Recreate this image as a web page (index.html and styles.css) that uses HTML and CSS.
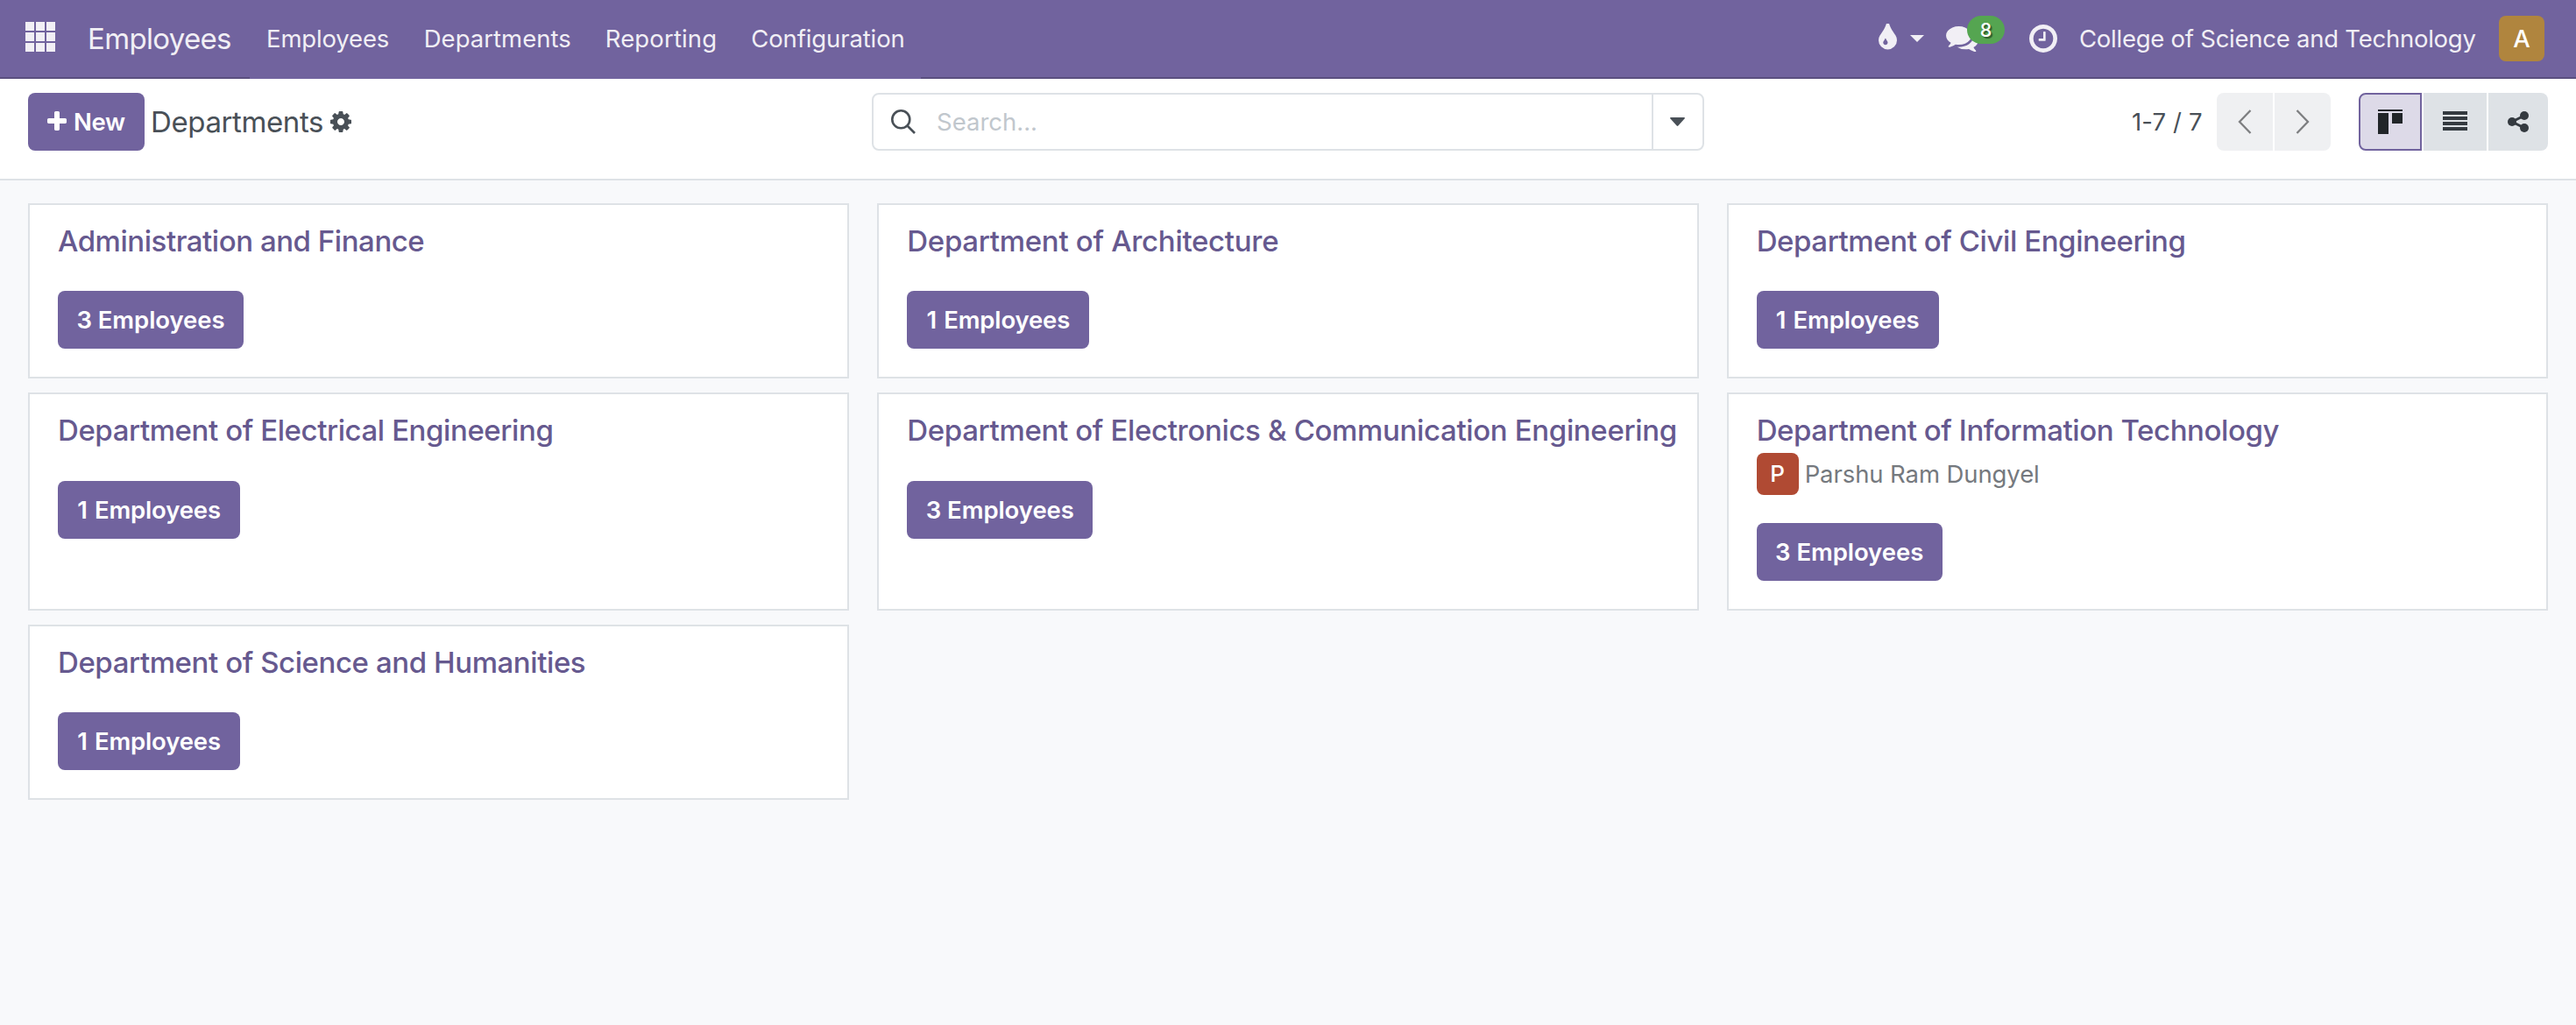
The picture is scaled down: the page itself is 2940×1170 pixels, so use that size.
FILE: index.html
```html
<!DOCTYPE html>
<html lang="en">
<head>
<meta charset="utf-8">
<title>Departments</title>
<link rel="stylesheet" href="styles.css">
</head>
<body>
<header class="navbar">
  <a class="apps" aria-label="Home menu">
    <svg class="icon-apps" viewBox="0 0 34 34"><path d="M0 0h10v10H0zM12 0h10v10H12zM24 0h10v10H24zM0 12h10v10H0zM12 12h10v10H12zM24 12h10v10H24zM0 24h10v10H0zM12 24h10v10H12zM24 24h10v10H24z"/></svg>
  </a>
  <a class="brand">Employees</a>
  <nav class="menu">
    <a class="menu-item menu-employees">Employees</a>
    <a class="menu-item">Departments</a>
    <a class="menu-item menu-reporting">Reporting</a>
    <a class="menu-item menu-config">Configuration</a>
  </nav>
  <div class="systray">
    <svg class="icon-drop" viewBox="384 128 1024 1408"><path d="M896 1152q0-36-20-69-1-1-15.500-22.500t-25.500-38-25-44-21-50.500q-4-16-21-16t-21 16q-7 23-21 50.500t-25 44-25.500 38-15.500 22.500q-20 33-20 69 0 53 37.500 90.500t90.500 37.500 90.500-37.500 37.500-90.500zm512-128q0 212-150 362t-362 150-362-150-150-362q0-145 81-275 6-9 62.500-90.500t101-151 99.500-178 83-201.500q9-30 34-47t51-17 51.500 17 33.500 47q28 93 83 201.500t99.500 178 101 151 62.500 90.500q81 127 81 275z"/></svg>
    <svg class="icon-caret" viewBox="0 0 16 8"><path d="M0 0h16L8 8z"/></svg>
    <span class="messages">
      <svg class="icon-comments" viewBox="0 256 1792 1408"><path d="M1408 768q0 139-94 257t-256.500 186.500-353.500 68.500q-86 0-176-16-124 88-278 128-36 9-86 16h-3q-11 0-20.500-8t-11.500-21q-1-3-1-6.500t.5-6.500 2-6l2.500-5 3.500-5.500 4-5 4.500-5 4-4.500q5-6 23-25t26-29.500 22.500-29 25-38.500 20.500-44q-124-72-195-177t-71-224q0-139 94-257t256.500-186.500 353.500-68.500 353.500 68.500 256.500 186.500 94 257zm384 256q0 120-71 224.500t-195 176.500q10 24 20.500 44t25 38.500 22.500 29 26 29.500 23 25q1 1 4 4.500t4.500 5 4 5 3.500 5.500l2.500 5 2 6 .5 6.500-1 6.500q-3 14-13 22t-22 7q-50-7-86-16-154-40-278-128-90 16-176 16-271 0-472-132 58 4 88 4 161 0 309-45t264-129q125-92 192-212t67-254q0-77-23-152 129 71 204 178t75 230z"/></svg>
      <span class="badge">8</span>
    </span>
    <svg class="icon-clock" viewBox="128 128 1536 1536"><path d="M1024 544v448q0 14-9 23t-23 9h-320q-14 0-23-9t-9-23v-64q0-14 9-23t23-9h224v-352q0-14 9-23t23-9h64q14 0 23 9t9 23zm416 352q0-148-73-273t-198-198-273-73-273 73-198 198-73 273 73 273 198 198 273 73 273-73 198-198 73-273zm224 0q0 209-103 385.500t-279.500 279.500-385.500 103-385.500-103-279.500-279.500-103-385.500 103-385.500 279.500-279.500 385.500-103 385.500 103 279.500 279.500 103 385.500z"/></svg>
    <span class="company">College of Science and Technology</span>
    <span class="user-avatar">A</span>
  </div>
</header>

<section class="control-panel">
  <div class="panel-left">
    <button class="btn btn-new">
      <svg class="icon-plus" viewBox="192 128 1408 1408"><path d="M1600 736v192q0 40-28 68t-68 28h-416v416q0 40-28 68t-68 28h-192q-40 0-68-28t-28-68v-416h-416q-40 0-68-28t-28-68v-192q0-40 28-68t68-28h416v-416q0-40 28-68t68-28h192q40 0 68 28t28 68v416h416q40 0 68 28t28 68z"/></svg>
      <span>New</span>
    </button>
    <h1 class="page-title">Departments</h1>
    <svg class="icon-cog" viewBox="128 128 1536 1536"><path d="M1152 896q0-106-75-181t-181-75-181 75-75 181 75 181 181 75 181-75 75-181zm512-109v222q0 12-8 23t-20 13l-185 28q-19 54-39 91 35 50 107 138 10 12 10 25t-9 23q-27 37-99 108t-94 71q-12 0-26-9l-138-108q-44 23-91 38-16 136-29 186-7 28-36 28h-222q-14 0-24.500-8.500t-11.500-21.500l-28-184q-49-16-90-37l-141 107q-10 9-25 9-14 0-25-11-126-114-165-168-7-10-7-23 0-12 8-23 15-21 51-66.500t54-70.500q-27-50-41-99l-183-27q-13-2-21-12.500t-8-23.500v-222q0-12 8-23t19-13l186-28q14-46 39-92-40-57-107-138-10-12-10-24 0-10 9-23 26-36 98.500-107.500t94.500-71.500q13 0 26 10l138 107q44-23 91-38 16-136 29-186 7-28 36-28h222q14 0 24.500 8.500t11.500 21.500l28 184q49 16 90 37l142-107q9-9 24-9 13 0 25 10 129 119 165 170 7 8 7 22 0 12-8 23-15 21-51 66.500t-54 70.500q26 50 41 98l183 28q13 2 21 12.500t8 23.500z"/></svg>
  </div>

  <div class="search">
    <div class="search-field">
      <svg class="icon-search" viewBox="0 0 28 28"><circle cx="11.300" cy="11.300" r="10"/><path d="M18 18l9 9"/></svg>
      <span class="placeholder">Search...</span>
    </div>
    <button class="search-toggle" aria-label="Toggle search panel">
      <svg class="icon-toggle" viewBox="0 0 17 10"><path d="M1 0h15q1 0 1 1L9.300 9.500q-.8.800-1.600 0L0 1q0-1 1-1z"/></svg>
    </button>
  </div>

  <div class="panel-right">
    <span class="pager">1-7 / 7</span>
    <div class="pager-buttons">
      <button class="pager-btn prev" aria-label="Previous"><svg class="icon-chevron" viewBox="0 0 16 28"><path d="M14.500 1L2 14l12.500 13"/></svg></button>
      <button class="pager-btn next" aria-label="Next"><svg class="icon-chevron" viewBox="0 0 16 28"><path d="M1.500 1L14 14 1.500 27"/></svg></button>
    </div>
    <div class="views">
      <button class="view-btn active" aria-label="Kanban"><svg class="icon-kanban" viewBox="0 0 28 28"><path d="M0 0h28v2H0zM0 4h12v24H0zM16 4h12v12H16z"/></svg></button>
      <button class="view-btn" aria-label="List"><svg class="icon-list" viewBox="0 0 28 22"><path d="M0 0h28v4H0zM0 6h28v4H0zM0 12h28v4H0zM0 18h28v4H0z"/></svg></button>
      <button class="view-btn last" aria-label="Hierarchy"><svg class="icon-share" viewBox="0 0 24 24"><path class="links" d="M19 5L5 12l14 7"/><circle cx="19" cy="5" r="5"/><circle cx="5" cy="12" r="5"/><circle cx="19" cy="19" r="5"/></svg></button>
    </div>
  </div>
</section>

<main class="kanban">
  <article class="card">
    <h2 class="card-title title-admin">Administration and Finance</h2>
    <button class="btn">3 Employees</button>
  </article>
  <article class="card">
    <h2 class="card-title title-wide">Department of Architecture</h2>
    <button class="btn btn-one">1 Employees</button>
  </article>
  <article class="card">
    <h2 class="card-title">Department of Civil Engineering</h2>
    <button class="btn btn-one">1 Employees</button>
  </article>
  <article class="card">
    <h2 class="card-title">Department of Electrical Engineering</h2>
    <button class="btn btn-one">1 Employees</button>
  </article>
  <article class="card">
    <h2 class="card-title title-long">Department of Electronics &amp; Communication Engineering</h2>
    <button class="btn">3 Employees</button>
  </article>
  <article class="card">
    <h2 class="card-title">Department of Information Technology</h2>
    <div class="manager"><span class="manager-avatar">P</span><span class="manager-name">Parshu Ram Dungyel</span></div>
    <button class="btn">3 Employees</button>
  </article>
  <article class="card">
    <h2 class="card-title">Department of Science and Humanities</h2>
    <button class="btn btn-one">1 Employees</button>
  </article>
</main>
</body>
</html>
```
FILE: styles.css
```css
* { box-sizing: border-box; }
body {
  margin: 0;
  min-height: 1170px;
  background: #f8f9fb;
  color: #495057;
  font: 400 27.5px/40px Inter, "Liberation Sans", sans-serif;
  white-space: nowrap;
}
button { margin: 0; padding: 0; border: 0; font: inherit; color: inherit; }
svg { display: block; flex: none; fill: currentColor; }
h1, h2 { margin: 0; }

/* Top navigation */
.navbar {
  display: flex;
  align-items: center;
  height: 90px;
  padding: 0 36px 0 29px;
  border-bottom: 2px solid #5a4f7f;
  background: #71639e;
  color: #f1eff5;
}
.icon-apps { width: 34px; height: 34px; margin-top: -4px; }
.brand { width: 184.5px; margin-left: 37px; font-size: 33px; letter-spacing: -.68px; }
.menu {
  display: flex;
  align-items: center;
  align-self: flex-start;
  height: 90px;
  padding-bottom: 2px;
  background: #71639e;
}
.menu-item { padding: 0 19.500px; letter-spacing: .02px; }
.menu-employees { padding-right: 20px; letter-spacing: -.15px; }
.menu-reporting { letter-spacing: .14px; }
.menu-config { padding-right: 18.500px; letter-spacing: -.12px; }
.systray { display: flex; align-items: center; margin-left: auto; }
.icon-drop { width: 21px; height: 30px; margin-top: -4px; }
.icon-caret { width: 16px; height: 8px; margin-left: 15px; }
.messages { position: relative; width: 37px; margin-left: 25px; }
.icon-comments { width: 37px; height: 29px; }
.badge {
  position: absolute;
  left: 24px;
  top: -12px;
  width: 43px;
  height: 32px;
  border-radius: 16px;
  background: #55a551;
  color: #fff;
  font-size: 21.500px;
  font-weight: 500;
  line-height: 32px;
  text-align: center;
  text-shadow: 2px 2px 1px rgba(0, 0, 0, .45);
}
.icon-clock { width: 32px; height: 32px; margin-left: 58px; }
.company { width: 453px; margin-left: 25px; letter-spacing: -.246px; }
.user-avatar {
  width: 52px;
  margin-left: 26px;
  border-radius: 8px;
  background: #b0853e;
  color: #fff;
  font-weight: 500;
  line-height: 52px;
  text-align: center;
}

/* Control panel */
.control-panel {
  display: flex;
  height: 116px;
  padding: 16px 32px 0;
  border-bottom: 2px solid #dee2e6;
  background: #fff;
}
.panel-left { display: flex; align-items: center; width: 963px; height: 66px; }
.btn {
  display: block;
  width: 212px;
  height: 66px;
  border-radius: 8px;
  background: #71639e;
  color: #fff;
  font-weight: 600;
  letter-spacing: -.06px;
  line-height: 66px;
  text-align: center;
}
.btn-one { width: 208px; letter-spacing: -.15px; word-spacing: 1.500px; }
.btn-new { display: flex; align-items: center; width: 133px; padding-left: 22px; letter-spacing: -.36px; }
.icon-plus { width: 22px; height: 22px; margin-top: -2px; margin-right: 8px; }
.page-title { width: 205px; margin-left: 7px; font-size: 33px; font-weight: 400; letter-spacing: -.4px; }
.icon-cog { width: 24px; height: 24px; }

.search { display: flex; width: 950px; height: 66px; border: 2px solid #dee2e6; border-radius: 8px; }
.search-field { display: flex; flex: 1; align-items: center; padding-left: 20px; }
.icon-search { width: 28px; height: 28px; fill: none; stroke: #495057; stroke-width: 2.600px; }
.placeholder { margin-left: 24px; color: #c1c7cd; }
.search-toggle { display: flex; align-items: center; width: 58px; padding-left: 19px; border-left: 2px solid #dee2e6; background: none; }
.icon-toggle { width: 17px; height: 10px; }

.panel-right { display: flex; align-items: center; height: 66px; margin-left: auto; }
.pager { width: 97px; letter-spacing: .14px; }
.pager-buttons, .views { display: flex; gap: 2px; }
.pager-btn, .view-btn { display: flex; align-items: center; justify-content: center; height: 66px; }
.pager-btn { width: 64px; background: #eff0f2; color: #7d7e80; }
.prev { border-radius: 8px 0 0 8px; }
.next { border-radius: 0 8px 8px 0; }
.icon-chevron { width: 16px; height: 28px; fill: none; stroke: currentColor; stroke-width: 2.300px; }
.views { margin-left: 32px; }
.view-btn { width: 72px; background: #dee2e6; color: #343a40; }
.view-btn.active { border: 2px solid #71639e; border-radius: 8px 0 0 8px; background: #dddae8; color: #212529; }
.view-btn.last { width: 68px; border-radius: 0 8px 8px 0; }
.icon-kanban { width: 28px; height: 28px; }
.icon-list { width: 28px; height: 22px; margin-top: -2px; }
.icon-share { width: 24px; height: 24px; }
.links { fill: none; stroke: currentColor; stroke-width: 3px; }

/* Department cards */
.kanban {
  display: grid;
  grid-template-columns: repeat(3, 1fr);
  grid-template-rows: 200px 249px 200px;
  gap: 16px 32px;
  padding: 26px 32px;
}
.card {
  display: flex;
  flex-direction: column;
  align-items: flex-start;
  padding: 21px 22px 0 32px;
  border: 2px solid #dee2e6;
  background: #fff;
}
.card-title {
  color: #66598f;
  font-size: 33px;
  font-weight: 500;
  letter-spacing: -.42px;
}
.title-admin { letter-spacing: -.46px; }
.title-wide { letter-spacing: -.3px; }
.title-long { letter-spacing: -.35px; }
.card .btn { margin-top: 37px; }
.card:nth-child(4) .btn, .card:nth-child(5) .btn { margin-top: 38px; }
.manager { display: flex; align-items: center; margin: 6px 0 32px; color: #75797e; }
.manager-avatar {
  width: 48px;
  border-radius: 8px;
  background: #b04a33;
  color: #fff;
  font-size: 26px;
  font-weight: 500;
  line-height: 48px;
  text-align: center;
}
.manager-name { margin-left: 7px; letter-spacing: -.1px; }
.card .manager + .btn { margin-top: 0; }
```
